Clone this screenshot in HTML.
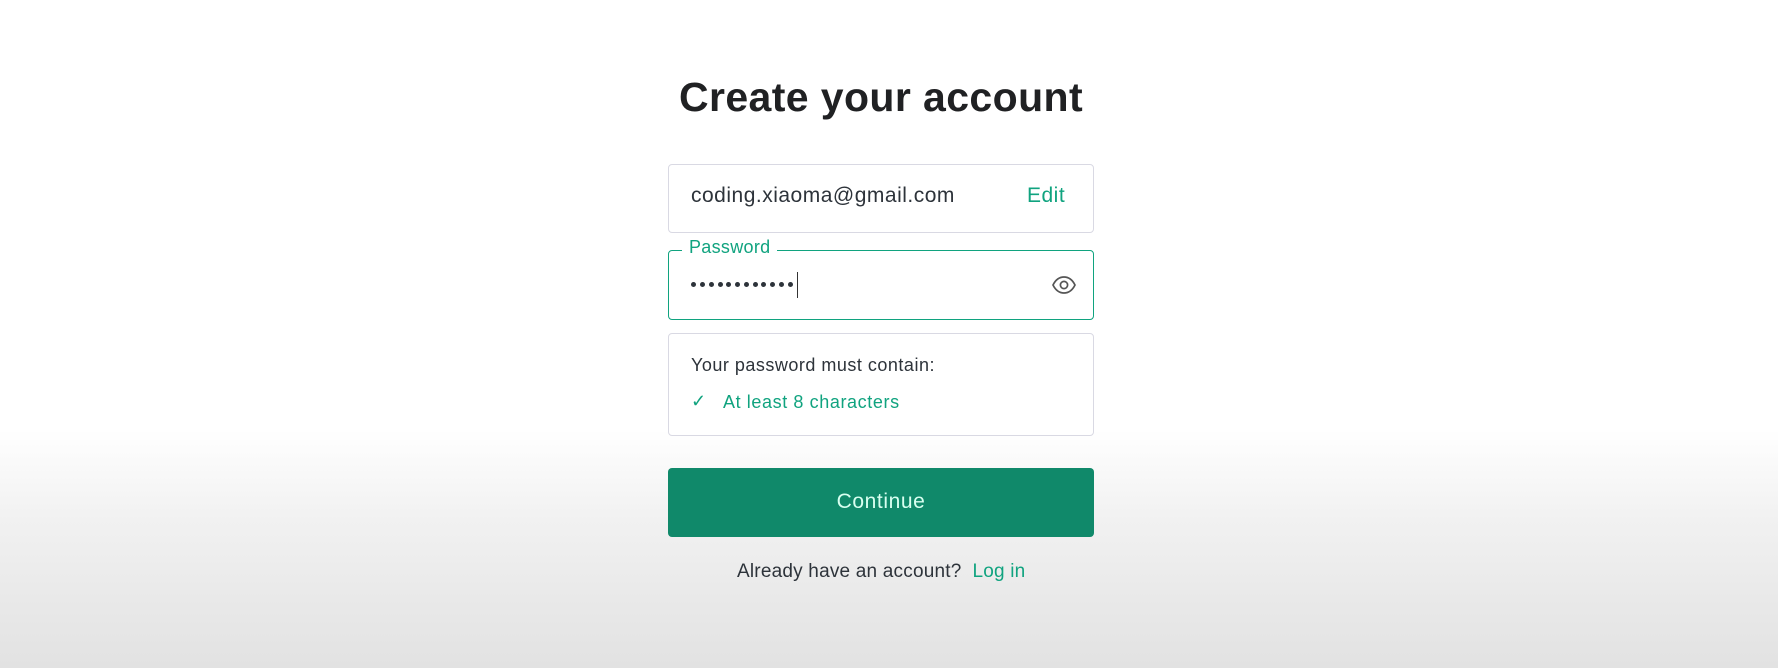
<!DOCTYPE html>
<html><head><style>
html,body{margin:0;padding:0;}
body{width:1778px;height:668px;overflow:hidden;position:relative;font-family:"Liberation Sans",sans-serif;
background:linear-gradient(to bottom,#fff 0px,#fff 430px,#f1f1f1 520px,#e2e2e2 668px);}
.abs{position:absolute;white-space:nowrap;}
h1{position:absolute;left:668px;width:426px;top:74px;margin:0;text-align:center;font-size:41px;font-weight:bold;color:#202123;letter-spacing:0.4px;}
.box{position:absolute;left:668px;width:424px;border:1.5px solid #d9d9e3;border-radius:4px;background:#fff;}
.d{position:absolute;top:282px;width:5px;height:5px;border-radius:50%;background:#2d333a;}
</style></head><body>
<h1>Create your account</h1>
<div class="box" style="top:164px;height:67px;"></div>
<div class="abs" style="left:691px;top:184px;font-size:21px;letter-spacing:0.5px;color:#2d333a;">coding.xiaoma@gmail.com</div>
<div class="abs" style="left:1027px;top:184px;font-size:21px;letter-spacing:0.5px;color:#10a37f;">Edit</div>
<div class="box" style="top:250px;height:68px;border-color:#10a37f;"></div>
<div class="abs" style="left:682px;top:237px;padding:0 7px;background:#fff;font-size:18px;letter-spacing:0.3px;color:#10a37f;">Password</div>
<div class="d" style="left:691px"></div><div class="d" style="left:700px"></div><div class="d" style="left:709px"></div><div class="d" style="left:718px"></div><div class="d" style="left:726px"></div><div class="d" style="left:735px"></div><div class="d" style="left:744px"></div><div class="d" style="left:753px"></div><div class="d" style="left:761px"></div><div class="d" style="left:770px"></div><div class="d" style="left:779px"></div><div class="d" style="left:788px"></div>
<div class="abs" style="left:797px;top:272px;width:1px;height:26px;background:#333;"></div>
<svg class="abs" style="left:1051px;top:275px" width="26" height="20" viewBox="0 0 26 20"><path d="M2 10C5 4 9 2 13 2s8 2 11 8c-3 6-7 8-11 8S5 16 2 10z" fill="none" stroke="#555" stroke-width="1.7"/><circle cx="13" cy="10" r="3.6" fill="none" stroke="#555" stroke-width="1.7"/></svg>
<div class="box" style="top:333px;height:101px;"></div>
<div class="abs" style="left:691px;top:355px;font-size:18px;letter-spacing:0.5px;color:#2d333a;">Your password must contain:</div>
<div class="abs" style="left:691px;top:391px;font-size:18px;color:#10a37f;">✓</div>
<div class="abs" style="left:723px;top:392px;font-size:18px;letter-spacing:0.6px;color:#10a37f;">At least 8 characters</div>
<div class="abs" style="left:668px;top:468px;width:426px;height:69px;background:#10896a;border-radius:4px;"></div>
<div class="abs" style="left:668px;top:490px;width:426px;text-align:center;font-size:21px;letter-spacing:0.6px;color:#d8fff0;">Continue</div>
<div class="abs" style="left:737px;top:561px;font-size:19px;letter-spacing:0.2px;color:#2d333a;">Already have an account?&nbsp; <span style="color:#10a37f">Log in</span></div>
</body></html>
